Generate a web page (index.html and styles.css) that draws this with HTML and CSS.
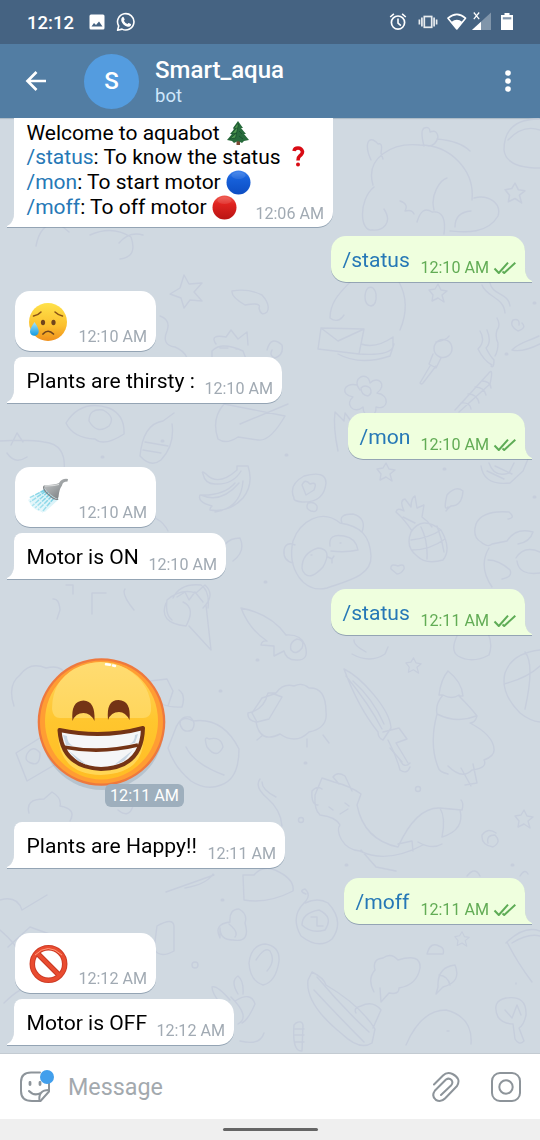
FILE: index.html
```html
<!DOCTYPE html>
<html lang="en">
<head>
<meta charset="utf-8">
<title>Smart_aqua</title>
<link rel="stylesheet" href="styles.css">
</head>
<body>
<svg width="0" height="0" class="defs">
  <defs>
    <symbol id="checks" viewBox="0 0 24 14"><path d="M1.500 7.500 5.800 12 15 1.700M9.500 10.600l1.700 1.400L22.300 1.700" fill="none" stroke="#5eac56" stroke-width="2" stroke-linejoin="round"/></symbol>
    <symbol id="star" viewBox="-10 -10 20 20"><path d="M0-9 3-3 9-2 4 2 6 9 0 5-6 8-5 2-9-3-3-4Z"/></symbol>
    <linearGradient id="yellow" x1="0" y1="0" x2="0" y2="1"><stop offset="0" stop-color="#ffe24a"/><stop offset=".6" stop-color="#fbc02f"/><stop offset="1" stop-color="#f0901c"/></linearGradient>
    <linearGradient id="blue" x1="0" y1="0" x2="0" y2="1"><stop offset="0" stop-color="#3f82ec"/><stop offset=".3" stop-color="#1762dc"/><stop offset="1" stop-color="#0d4dc2"/></linearGradient>
    <linearGradient id="red" x1="0" y1="0" x2="0" y2="1"><stop offset="0" stop-color="#f05a50"/><stop offset=".35" stop-color="#e02420"/><stop offset="1" stop-color="#b91413"/></linearGradient>
    <linearGradient id="face" x1="0" y1="0" x2="0" y2="1"><stop offset="0" stop-color="#ffd35e"/><stop offset=".5" stop-color="#ffc62e"/><stop offset="1" stop-color="#ffbd24"/></linearGradient>
    <linearGradient id="shine" x1="0" y1="0" x2="0" y2="1"><stop offset="0" stop-color="#ffdc72"/><stop offset="1" stop-color="#ffd65c"/></linearGradient>
    <linearGradient id="steel" x1="0" y1="0" x2="1" y2="1"><stop offset="0" stop-color="#c9cccd"/><stop offset=".5" stop-color="#9da1a3"/><stop offset="1" stop-color="#6c7073"/></linearGradient>
    <linearGradient id="water" x1="1" y1="0" x2="0" y2="1"><stop offset="0" stop-color="#5cc5dc"/><stop offset="1" stop-color="#c7eef7"/></linearGradient>
    <linearGradient id="drop" x1="0" y1="0" x2="0" y2="1"><stop offset="0" stop-color="#a6e4fa"/><stop offset="1" stop-color="#129be2"/></linearGradient>
  </defs>
</svg>

<div class="phone">
  <div class="statusbar">
    <span class="clock">12:12</span>
    <svg class="st-photo" width="16" height="16" viewBox="0 0 16 16"><path fill="#fff" fill-rule="evenodd" d="M2 .5h12q1.500 0 1.500 1.500v12q0 1.500-1.500 1.500H2Q.5 15.500.5 14V2Q.5.5 2 .5ZM2.500 12.500h11L10 7.500 7 11 5 9Z"/></svg>
    <svg class="st-wa" width="20" height="20" viewBox="0 0 20 20"><path d="M1.600 18.200 2.700 14A8.200 8.200 0 1 1 6 17.100Z" fill="none" stroke="#fff" stroke-width="1.600" stroke-linejoin="round"/><path fill="#fff" d="M6.200 5.200q1-.8 1.600.2l.8 1.800q.2.500-.8 1.500 1.300 2.500 3.700 3.400.9-1.300 1.300-1.100l2 1q.5.300.2 1.200-1 2-3.300 1.500Q7 13.500 5.300 9 4.800 6.500 6.200 5.200Z"/></svg>
    <span class="grow"></span>
    <svg class="st-icons" width="128" height="22" viewBox="388 11 128 22" fill="none" stroke="#fff">
      <circle cx="398" cy="22.600" r="6.600" stroke-width="1.700"/><path d="M398 18.500v4.600l2.900 2.500M390.200 17l3.700-3.200M405.800 17l-3.700-3.200" stroke-width="1.600"/>
      <g opacity=".88"><rect x="424.300" y="16.500" width="7.400" height="10.800" stroke-width="1.700"/><path d="M421.900 17.500v9M434.100 17.500v9M419.400 19.500v5M436.600 19.500v5" stroke-width="1.700"/></g>
      <path d="M448 18.200Q457 10.700 465.500 18.200L456.800 29Z" stroke-width="1.600" stroke-linejoin="round"/><path d="M451.300 22Q457 17.500 462.300 22L456.800 29Z" fill="#fff" stroke="none"/>
      <path d="M491 12.500V30H472Z" fill="#fff" opacity=".32" stroke="none"/><path d="M481 21.700V30h-9Z" fill="#fff" stroke="none"/><path d="M473.800 12.500l5.400 6.600M479.200 12.500l-5.400 6.600" stroke-width="1.200"/>
      <path d="M504.500 15v-2h5v2h3.500V30h-12V15Z" fill="#fff" stroke="none"/><path d="M502.800 18.300h8.500" stroke="#8297ad" stroke-width="2.200"/>
    </svg>
  </div>

  <div class="header">
    <svg class="back" width="24" height="24" viewBox="0 0 24 24"><path d="M12.500 3 3.500 12l9 9M3.500 12H22" fill="none" stroke="#fff" stroke-width="2.700"/></svg>
    <div class="avatar">S</div>
    <div class="who"><div class="name">Smart_aqua</div><div class="sub">bot</div></div>
    <svg class="dots" width="8" height="24" viewBox="0 0 8 24" fill="#fff"><circle cx="4" cy="4" r="2.800"/><circle cx="4" cy="12" r="2.800"/><circle cx="4" cy="20" r="2.800"/></svg>
  </div>

  <div class="chat">
    <svg class="wallpaper" viewBox="0 118 540 935" width="540" height="935">
      <g fill="none" stroke="#c6cedc" stroke-width="1.400" stroke-linejoin="round" stroke-linecap="round">
        <!-- sleeping bear, moon, dragon -->
        <path d="M373 185C365 158 392 142 420 145 450 145 475 170 472 200M434 210C430 195 440 180 447 178M374 187C358 200 360 232 372 230 383 231 393 223 384 209M474 198C488 194 502 203 498 216 487 235 463 232 450 231M471 211C458 212 455 220 455 227M371 160C365 147 367 138 373 140q4 2 5 4 5-2 3 9l2 6M424 146q-4-15 0-18 6-2 6 4 7-3 8 5-2 9-10 9M437 139Q460 141 470 151M400 201q9 3 5 10 7-2 9 3M417 222q5-17 15-10 15-2 12 22M539 119Q504 119 504 150 506 168 540 168M508 140q15-16 32-10"/>
        <path d="M399 282Q411 304 400 330M352 280C343 290 330 300 330 318q8 6 14-3M368 288q6-3 8 6 1 11-5 12-6-1-6-9 0-6 3-9ZM321 328l43 1-5 25-41-5ZM321 328l17 13 26-12M359 354q30 2 34-7l0-10M393 337q-17 12-32 7M338 354q22 12 52 2l4-12"/>
        <path d="M430 366 420 383q2 2 3 0l13-17M438 356a9 9 0 1 1 2 1ZM436 342q11-2 13-6M433 354l-4 10 7 4 5-10M482 285c4 12 22 12 23 28M490 283c2 12 19 10 20 23M480 331q6 10-2 18 6 12 14 16M487 330q5 12-1 18 4 8 8 12q0 9-3 6M497 318q4 7 0 12-2 7 1 13 0 8-3 13M512 350c8-8 15-8 27-14M512 350c8 2 16 0 28-6M519 325q1-7-6-5-4 6 5 11 9-3 4-8"/>
        <path d="M360 390c-10-12 8-20 10-7 8-8 18 2 7 10 14 2 11 18-1 14 1 12-13 12-13 0-9 8-19-3-10-10-13-2-10-15 4-12ZM361 388q4-4 9 0 3 5-2 8-7-1-7-8M455 410l33-36q6-8 2 10l-31 28M461 403q9-1 10 6M468 394q9 0 11 9M475 387q9 0 11 8M482 381q8 0 9 7M335 412q-2 15 3 39M335 412l9 9 1-8 9 12"/>
        <!-- food -->
        <path d="M203 474q-2-4 3 0 12 13 31-4l0-4h11q6 18-5 32-14 15-33 12 0-3 2-4-15-4-12-11 24 1 35-12M203 474q2 10 12 10 18 1 26-13M201 495q20 9 38-12M215 512q26-4 28-31M294 498q-6-13 10-22 22-6 22 7-2 20-24 19-9-1-8-4ZM306 495l-4-10q3-7 8-1 8-3 4 6ZM308 503q6-2 9 3 1 7-6 5-6-2-3-8Z"/>
        <path d="M340 523c-18-15-40-2-47 18-6 27 10 53 34 47 20-7 45-12 44-32-1-20-10-30-31-33ZM342 523q-4-9 11-9 14 4 9 18M293 563q-10-2-9-13 2-9 11-5M302 568q0-15 16-20 15 1 5 19-12 13-18 7-3-3-3-6ZM330 546q-2-13 14-10 12 2 14 14-13 3-27 1M328 557l4 2 2-3M311 555h1M340 543h1M332 559v4"/>
        <path d="M411 532q11-17 30-2 11 19 2 30-17 5-26-4-12-9-6-24ZM412 531q-7-11-16-19 1-5 8-1-5-11 1-12l6 8q0-9 4-11l2 12 7-3-2 12q6 4 10 10M411 540q18-2 30-10M412 550q18 0 33-11M421 527q7 14 6 32M437 526q5 13 7 26M415 523l-12-6M448 507q-5 5-1-12 9-10 16-4-1 15-12 15-2 1-5 5M391 569q-1-6 7-3 7-3 6 3-3 5-7 5Z"/>
        <path d="M508 519q8-1 1-7-27-2-33 12-4 13 5 18 7 6 11 2l15-3q9-14 26-9-3 10-15 12M489 548q-11 18 3 39M488 560q11 0 22 10 3 7-8 9M516 558q8-13 24-6M517 561q2 15 23 12M481 466q3 20 29 17l13-12 5-12M489 463q5 15 20 10l5-10M487 471l17 8M495 466l17 8"/>
        <!-- ice cream, comet, sheep, umbrella, tree, ball -->
        <path d="M172 620q-7-5-5-20 14-12 29-7l9-8q11 10-2 23M189 626l22 24-5-45M166 603q-8 20 20 23 10-18-3-24M173 598q7-15 28-13 9 6 7 23M177 597l8-5 4 8 6-8 8 10M241 608q30 6 45 27 15-1 19 10 5 16-9 15-10 0-12-9-6 3-10 5l0-10-13-1q1-5 6-4-18-12-26-33ZM297 639q8 1 5 9-6 8-11 2-2-8 6-11ZM354 640q-1 5 12 12M352 654q18 10 33 0l3-7"/>
        <path d="M276 693q7-10 18-7 8-4 15 2 17-1 17 24 2 16-17 20-13 13-29 2-20 10-24-12-9-2-8-9 16-3 20-20ZM252 713l10-15 12-4 8 3-13 22-12 3ZM263 735l-6 5M307 739v8M323 735l6 8M344 669c17 8 46 40 47 59l-8 12q-5-2-5-8-20-25-34-63ZM346 676q23 28 36 53M353 681q20 18 31 43M383 732l16-4 8 11-11 4 12 20M390 748l12 14"/>
        <path d="M448 671q-7 8-9 24l4 0q-8 9-6 19-8 30 1 53 1 5 10 7M448 671q14 11 15 25l-4 0q12 12 18 20-2 7-7 7 23 12 24 26 1 7-10 11 4 8-12 10-10 10-24-4M443 695q9 5 16 0M437 714q20 10 39 2M461 768l10 18M473 764l4 19-12 2M457 636q-7 15 1 20 14 8 31-1 4-10-1-22M540 650q-28 3-35 23-5 20 15 40 10 8 20 9M504 684q23-6 36-18M525 652q10 12 0 57"/>
        <!-- fox -->
        <path d="M320 815q-6-5-5-20l7-17 12 4q16 4 27 12l-4 11q7 35 41 42 18-40 42-39 21 2 22 2 2-7-1-10M320 815q16 2 20 10c-5 5 2 25 20 26 20 10 42 5 63-6M442 844q-10 6-24-2M398 844l14-3 1 10M361 850l15 17 20 4M440 808q6 10 2 29M460 810q5 20-18 27M339 784l-6-7q4-6 12-1l7 15M318 805q-7 0-6-14 5-6 10-2M329 807l4 3M340 814l8-5M345 803l4 3"/>
        <path d="M260 779q-6 8 7 19 14 12 15 28M262 782q0 8 14 15M488 843q-2-8 7-8 7 7-2 12-12-2-11-12 6-8 14-2M520 876q5-8 8-2M467 876q8-10 13 0M388 740q8 15 12 30 7 5 10-3M400 760q4 9 10 3"/>
        <!-- bottom objects -->
        <path d="M306 894q-8-3-1-5 7 6-1 14-14 14-3 33 18 14 31 3 13-18-4-36-10-6-23 0M302 925q0-12 17-15 15 7 6 20-14 4-23-5ZM311 917h6v9h6M220 938q-7-14 10-16-1-13 9-13 9 5 6 14 6 20-12 17-13 0-13-12ZM229 924q10 8 6 13M249 963q2-18 16-19 15 2 14 17-3 21-16 24-13-4-14-22ZM256 960q9-14 14-9 6 10-3 20"/>
        <path d="M312 972q12 6 14 13 34 20 49 44l-3 14q-12 8-30-9-37-30-34-54ZM317 977q25 30 52 55M314 990q26 28 50 52M356 1013q-3-5 5-7 12-6 20 4l-8 18M374 992q-7-13 1-22-3-11 8-12 8-6 15 2 23-7 22 8-3 17-21 20 0 7-10 5l-8 9-1-14M428 951q3-9 11-5 6 2 4 8h-16Z"/>
        <path d="M438 987q-1-20 17-22 7 17-12 22l-7 7ZM439 975q9 1 11 10M498 1017q-7-16 8-19 21-3 20 17-2 10-7 13l5 13q-5 5-9-2l-2-15q-10 0-15-7ZM505 1010l7 8 5-13 4 10M506 943q18-18 34-12M507 942q10 20 25 40M512 943q16-10 28-7M406 1045q15-35 40-35 27 7 25 34M516 983v1M447 1031h2"/>
        <path d="M296 1023q6-3 7 2l-1 26q-10 1-8-26ZM295 1029h9M295 1035h9M295 1042h9M230 1000q-13-15-18-13 0 6 8 16M238 994q-8-13 0-18 6 5 5 18M235 1001q16-10 20 3-7 16-13 19M231 997q20 20 7 27M240 1041q20 5 24-8"/>
        <path d="M0 900q17-5 22 10l25-15M0 930q18 15 21 28M8 947l22-20 25 9M157 926q16-9 17 0v25q-14 8-20-2ZM185 888q22-4 28-14M166 892l48-17M243 875h11q9-10 21-5 20 9 18 21-25 13-49 9ZM4 1003q17-17 31-18l17 5"/>
        <!-- left side objects -->
        <path d="M14 706q-7-21 6-31 10-14 26-7 15-4 20 7 8-1 13 9M139 688q-4-9 4-13l7 6 17-2 6 12-5 15M155 698q6 10 27 9 4-12-3-17M175 730q6-17 18-9 30-4 46 28 0 30-18 36-15 6-30-4-17-14-23-33ZM180 724q0-8 10-7 7 6 2 13-9 4-12-6M209 739q-6-4-2 8 10 13 16 0-2-11-14-8M186 747q8 17 38 28M16 753l27-17 13 28-29 17ZM27 754q6-10 13-1 0 14-9 10-7-2-4-9M29 813q-4-14 15-14l8-7q10 6 8 14 17 3 10 15M118 810q11 9 15-4"/>
        <path d="M184 275l5 9 13-1-8 9 8 9-12-1-6 8-3-10-11-4 10-6ZM232 291q16-3 30 4 9 10 5 17-6 5-8-4 3-6-14-3-14-8-13-14ZM216 344q-7-10 10-7l5-7 7 9 9-7 1 13M212 365v-14q9-10 31 0l6 16M220 348h8M236 349h1M267 350q4-15 15-5 2 10-7 13-6-2-3-8M160 316q11 4 7 15-6 14 8 16 18 8 10 24M66 423q15-24 43-15 16 7 15 26-20 13-29 5-22-1-29-16ZM89 421q0-13 14-11 13 7 6 16-12 9-20-5ZM140 456q3-32 23-35l11-8M140 456q11 12 21 4 14-15 11-36M145 442l23 4M143 450l18 3M218 439q-7-20 6-35l61 12q-15 26-27 24l-20-3q-12 8-20 2M240 424l48-20"/>
        <path d="M0 441q30-2 44 1 23 2 20 30l-13 7M11 445l6-12 6 9M7 453q8 12 20 4M129 515q30-3 39 16M171 534q6 0 8 5M218 563q3-25 22-25 6 13-7 23M53 599q6-1 7 11l-3 9M66 585h7v9M92 614v-21h14M134 610q-13-16-9-21M36 246q4-22 21-24l12 10M90 235q22-10 41 2 7 20-11 22M119 243q10-12 24-8"/>
        <use href="#star" x="504" y="182" width="22" height="22"/><use href="#star" x="428" y="283" width="20" height="20"/><use href="#star" x="376" y="462" width="20" height="20"/><use href="#star" x="405" y="657" width="17" height="17"/><use href="#star" x="514" y="809" width="20" height="20"/><use href="#star" x="454" y="931" width="16" height="16"/>
        <g stroke-width="3"><path d="M102 457h1M162 441h1M286 455h1M418 419h1M444 469h1M506 354h1M265 582h1M257 660h1M220 691h1M305 763h1M512 865h1M346 865h1M222 900h1M534 497h1M534 303h1"/></g>
        <circle cx="418" cy="789" r="2.500"/><circle cx="301" cy="820" r="2.500"/><circle cx="195" cy="965" r="3"/>
      </g>
    </svg>

    <div class="msg in first tail">
      <div class="rich">Welcome to aquabot <svg class="tree" width="22" height="24" viewBox="0 0 22 24"><path d="M9.500 18h3.500v6H9.500Z" fill="#7b4a34"/><path d="M11 0 6 7l2 0-5 6h2l-5 6 5 1 2 2 4-2 4 2 2-2 5-1-5-6h2l-5-6h2Z" fill="#286b3c"/><path d="M10 3 6.500 8l3-1-5 6 5-1-7 6 6-1 3-14ZM12 10l3 3M12 15l4 3" fill="#4e9850" stroke="#164b2b" stroke-width=".7"/></svg><br>
      <span class="cmd">/status</span>: To know the status <svg class="question" width="14" height="21" viewBox="0 0 14 21"><path d="M3 5Q3.500 2 7 2t4.500 3.500Q11.500 8 9 9.700 7 11.300 7 14.500" fill="none" stroke="#d90b14" stroke-width="3.500"/><circle cx="7" cy="18.500" r="2" fill="#d90b14"/></svg><br>
      <span class="cmd">/mon</span>: To start motor <svg class="ball" width="25" height="25" viewBox="0 0 25 25"><circle cx="12.500" cy="12.500" r="12" fill="url(#blue)"/><ellipse cx="12.500" cy="5.500" rx="7" ry="3.500" fill="#fff" opacity=".1"/></svg><br>
      <span class="cmd">/moff</span>: To off motor <svg class="ball" width="25" height="25" viewBox="0 0 25 25"><circle cx="12.500" cy="12.500" r="12" fill="url(#red)"/><ellipse cx="12.500" cy="5.500" rx="7" ry="3.500" fill="#fff" opacity=".1"/></svg></div>
      <span class="time corner">12:06 AM</span>
    </div>

    <div class="msg out w-status g9"><span class="txt">/status</span><span class="time">12:10 AM</span><svg class="ck" width="24" height="14"><use href="#checks"/></svg></div>

    <div class="msg in emoji g9">
      <svg class="em" width="40" height="40" viewBox="0 0 40 40"><circle cx="20" cy="20" r="19" fill="url(#yellow)"/><path d="M5.500 14q5-1 7.500-4M27 10q3 3 7.500 4" fill="none" stroke="#8a5317" stroke-width="1.500" stroke-linecap="round"/><ellipse cx="15" cy="20.500" rx="2.100" ry="2.800" fill="#71451c"/><ellipse cx="25.500" cy="20.500" rx="2.100" ry="2.800" fill="#71451c"/><path d="M15 32q5-5.500 10.500 0" fill="none" stroke="#71451c" stroke-width="1.700" stroke-linecap="round"/><path d="M6.500 20q-4.500 6.500-4.500 9.500a4.300 4.300 0 0 0 8.700 0Q10.700 26 6.500 20Z" fill="url(#drop)"/></svg>
      <span class="time">12:10 AM</span></div>
    <div class="msg in tail w-thirsty g6"><span class="txt">Plants are thirsty :</span><span class="time">12:10 AM</span></div>

    <div class="msg out w-mon g10"><span class="txt">/mon</span><span class="time">12:10 AM</span><svg class="ck" width="24" height="14"><use href="#checks"/></svg></div>

    <div class="msg in emoji g8">
      <svg class="em" width="40" height="40" viewBox="0 0 40 40"><path d="M17 10 31 21 17 34Q5 34 0 22Z" fill="url(#water)" opacity=".3"/><path d="M17 12 1 20M18 13 2 24M20 14 4 28M22 16 7 30M24 18 10 32M26 20 14 34" stroke="url(#water)" stroke-width="1.500" stroke-dasharray="5 1"/><path d="M16 7Q26 7 31 5q3-5 9-4l-.5 2.500q-5 0-5.500 4-3 4-3.500 11.500l-1 2Q21 17 15.500 9Z" fill="url(#steel)"/><path d="M16.500 8q10 0 14.500-1.500" stroke="#dfe1e1" fill="none"/><path d="M16 8q-2 3 5 9t9 4" fill="none" stroke="#808487" stroke-width="1.200"/></svg>
      <span class="time">12:10 AM</span></div>
    <div class="msg in tail w-on g6"><span class="txt">Motor is ON</span><span class="time">12:10 AM</span></div>

    <div class="msg out w-status g10"><span class="txt">/status</span><span class="time">12:11 AM</span><svg class="ck" width="24" height="14"><use href="#checks"/></svg></div>

    <div class="sticker">
      <svg width="136" height="138" viewBox="0 0 136 138">
        <ellipse cx="68" cy="72" rx="62" ry="63" fill="#91a4b5" opacity=".42"/>
        <circle cx="67.500" cy="67" r="63.800" fill="#ee793e"/><circle cx="67.500" cy="67" r="61.500" fill="#ff9d33"/><ellipse cx="67.500" cy="66" rx="56.500" ry="58.500" fill="url(#face)"/>
        <path d="M18 54q0-27 22-40 27-14 53 0 25 16 24 42-1 7-8 7H26q-7 0-8-9Z" fill="url(#shine)"/>
        <path d="M38.500 66q-2-20 11-20.500 12 .5 11 20.500-4-8-11-8-8 0-11 8ZM74 65q-2-20 10.500-20 13 .5 11 20-4-8-10.500-8-8 0-11 8Z" fill="#743415"/>
        <path d="M24 79q45 6 85-3 5 42-42 44Q25 119 24 79Z" fill="#ffde66" opacity=".75"/>
        <path d="M25.500 75q43 9 83.500-2-1 40-42 41-39-2-41.500-39Z" fill="#f5f6f7" stroke="#743415" stroke-width="4" stroke-linejoin="round"/>
        <path d="M29 92q38 7 75-2" fill="none" stroke="#743415" stroke-width="3.800"/>
        <path d="M29 80l3 10 7 1q-6-3-6-10M104 79l-3 9-6 1q6-2 6-9M35 96l9 10 9 4M99 95l-9 11-10 4" fill="#c9d7e4"/>
        <path d="M72 9.300l4 .4M79 10.500l2 .5" stroke="#fff" stroke-width="2.500" stroke-linecap="round"/>
      </svg>
      <span class="badge">12:11 AM</span>
    </div>

    <div class="msg in tail w-happy g14"><span class="txt">Plants are Happy!!</span><span class="time">12:11 AM</span></div>

    <div class="msg out w-moff g10"><span class="txt">/moff</span><span class="time">12:11 AM</span><svg class="ck" width="24" height="14"><use href="#checks"/></svg></div>

    <div class="msg in emoji g9">
      <svg class="em" width="40" height="40" viewBox="0 0 40 40"><g fill="none"><path d="M8.500 8.500l23 23" stroke="#c63820" stroke-width="5.500"/><circle cx="20.500" cy="20" r="16.200" stroke="#ce3b25" stroke-width="5.500"/><circle cx="20.500" cy="20" r="16.200" stroke="#e94c30" stroke-width="3.500"/><path d="M8.500 8.500l23 23" stroke="#e94c30" stroke-width="3.500"/><path d="M7 11Q20-2 34 11" stroke="#ff9a7b" stroke-width="1"/></g></svg>
      <span class="time">12:12 AM</span></div>
    <div class="msg in tail w-off g6"><span class="txt">Motor is OFF</span><span class="time">12:12 AM</span></div>
  </div>

  <div class="composer">
    <svg class="smile" width="38" height="38" viewBox="0 0 38 38" fill="none" stroke="#8d949a" stroke-width="2" stroke-linecap="round" stroke-linejoin="round"><path d="M31 13v10.500L22.500 33H14Q3 33 3 23V14Q3 4.500 13 4.500h9"/><path d="M21.500 33q-1.500-11 9.500-11M11 23q5 5.500 12 2"/><path d="M12 14.500v2M22 14.500v2" stroke-width="2.800"/><circle cx="29" cy="9" r="7" fill="#429fec" stroke="none"/></svg>
    <span class="ph">Message</span>
    <span class="grow"></span>
    <svg class="clip" width="28" height="32" viewBox="0 0 28 32" fill="none" stroke="#8d949a" stroke-width="2" stroke-linecap="round" stroke-linejoin="round"><path d="M2 13.500 11 4.500Q15 .5 20.500 3q9 4.500 4.500 12L13 27.500Q9 31.500 4 29-1 25 3 19.500L14 8.500q3-2 5.500.5 2 3-.5 5.500L9 24"/></svg>
    <svg class="cam" width="32" height="32" viewBox="0 0 32 32" fill="none" stroke="#8d949a" stroke-width="2"><rect x="2" y="2" width="28" height="28" rx="8"/><circle cx="16" cy="16" r="6.700"/></svg>
  </div>
  <div class="navbar"><div class="pill"></div></div>
</div>
</body>
</html>
```

FILE: styles.css
```css
* { box-sizing: border-box; }
body { margin: 0; font-family: Roboto, "Liberation Sans", sans-serif; }
.defs { position: absolute; }
.phone { width: 540px; height: 1140px; display: flex; flex-direction: column; overflow: hidden; }
.grow { flex: 1; }

.statusbar { height: 44px; flex: none; background: #456382; color: #fff; display: flex; align-items: center; padding: 0 24px 0 27px; }
.clock { font-size: 18.5px; font-weight: 500; letter-spacing: 0; width: 62px; line-height: 44px; padding-top: 2px; }
.st-wa { margin-left: 11px; }

.header { height: 74px; flex: none; background: #527da3; color: #fff; display: flex; align-items: center; padding: 0 28px 0 24px; }
.back { margin-right: 36px; }
.avatar { width: 55px; height: 55px; border-radius: 50%; background: #549cdf; font-size: 24px; font-weight: 500; display: flex; align-items: center; justify-content: center; }
.who { margin-left: 16px; flex: 1; padding-top: 1px; }
.name { font-size: 24px; font-weight: 500; line-height: 29px; }
.sub { font-size: 18.5px; line-height: 22px; color: #cfe6fb; }

.chat { height: 935px; flex: none; background: #d0d9e1; position: relative; overflow: hidden; display: flex; flex-direction: column; box-shadow: inset 0 2px 1px -1px #aab8c5; }
.wallpaper { position: absolute; left: 0; top: 0; }
.msg { position: relative; flex: none; height: 46px; border-radius: 15px; display: flex; align-items: flex-end; justify-content: space-between; filter: drop-shadow(0 1px .6px rgba(88, 112, 136, .5)); }
.msg::after { content: ""; position: absolute; bottom: 0; width: 8px; height: 16px; }
.in { background: #fff; align-self: flex-start; margin-left: 14px; padding: 0 9px 0 12.5px; }
.out { background: #efffde; align-self: flex-end; margin-right: 15px; padding: 0 8px 0 11.5px; border-bottom-right-radius: 0; }
.out::after { right: -7px; background: #efffde; clip-path: path("M0 0H1C1 8 3 13 8 15V16H0Z"); }
.tail { border-top-left-radius: 8px; border-bottom-left-radius: 0; }
.tail::after { left: -7px; background: #fff; clip-path: path("M8 0H7C7 8 5 13 0 15V16H8Z"); }
.emoji::after { content: none; }
.first { width: 319px; height: 109px; border-radius: 0 0 15px 0; display: block; }
.rich { font-size: 21px; line-height: 24.6px; padding-top: 2.5px; white-space: nowrap; }
.rich svg { vertical-align: top; }
.ball { margin-left: 0; }
.question { margin: 1px 0 0 5px; }
.tree { margin-left: 2px; }
.cmd { color: #2678b6; }
.txt { font-size: 21.1px; line-height: 24px; padding-bottom: 10px; white-space: nowrap; }
.out .txt { color: #2678b6; }
.time { font-size: 16.1px; line-height: 20px; padding-bottom: 4px; color: #a1aab3; white-space: nowrap; }
.out .time { color: #62ac55; margin-left: auto; margin-right: 4px; }
.out .ck { margin-bottom: 7px; }
.corner { position: absolute; right: 9px; bottom: -1px; }
.emoji { margin-left: 15px; width: 141px; height: 60px; }
.em { margin-bottom: 9px; }
.g6 { margin-top: 6px; }
.g8 { margin-top: 8px; }
.g9 { margin-top: 9px; }
.g10 { margin-top: 10px; }
.g14 { margin-top: 14px; }
.w-status { width: 194px; }
.w-mon { width: 177px; }
.w-moff { width: 181px; }
.w-thirsty { width: 268px; }
.w-on { width: 212px; }
.w-happy { width: 271px; }
.w-off { width: 220px; }

.sticker { position: relative; flex: none; width: 150px; height: 153px; margin: 20px 0 0 34px; }
.badge { position: absolute; left: 71px; bottom: 1px; width: 79px; height: 23px; border-radius: 6px; background: #9eafbd; color: #fff; font-size: 16.2px; line-height: 23px; text-align: center; }

.composer { height: 66px; flex: none; background: #fff; border-top: 1px solid #c3cbd2; display: flex; align-items: center; padding: 0 18px; }
.ph { color: #a3a9ae; font-size: 23.3px; margin-left: 12px; padding-top: 1px; }
.clip { margin-right: 30px; }
.cam { margin-right: 0; }
.navbar { height: 21px; flex: none; background: #efefef; display: flex; justify-content: center; align-items: center; }
.pill { width: 95px; height: 3px; border-radius: 2px; background: #656565; }
```
